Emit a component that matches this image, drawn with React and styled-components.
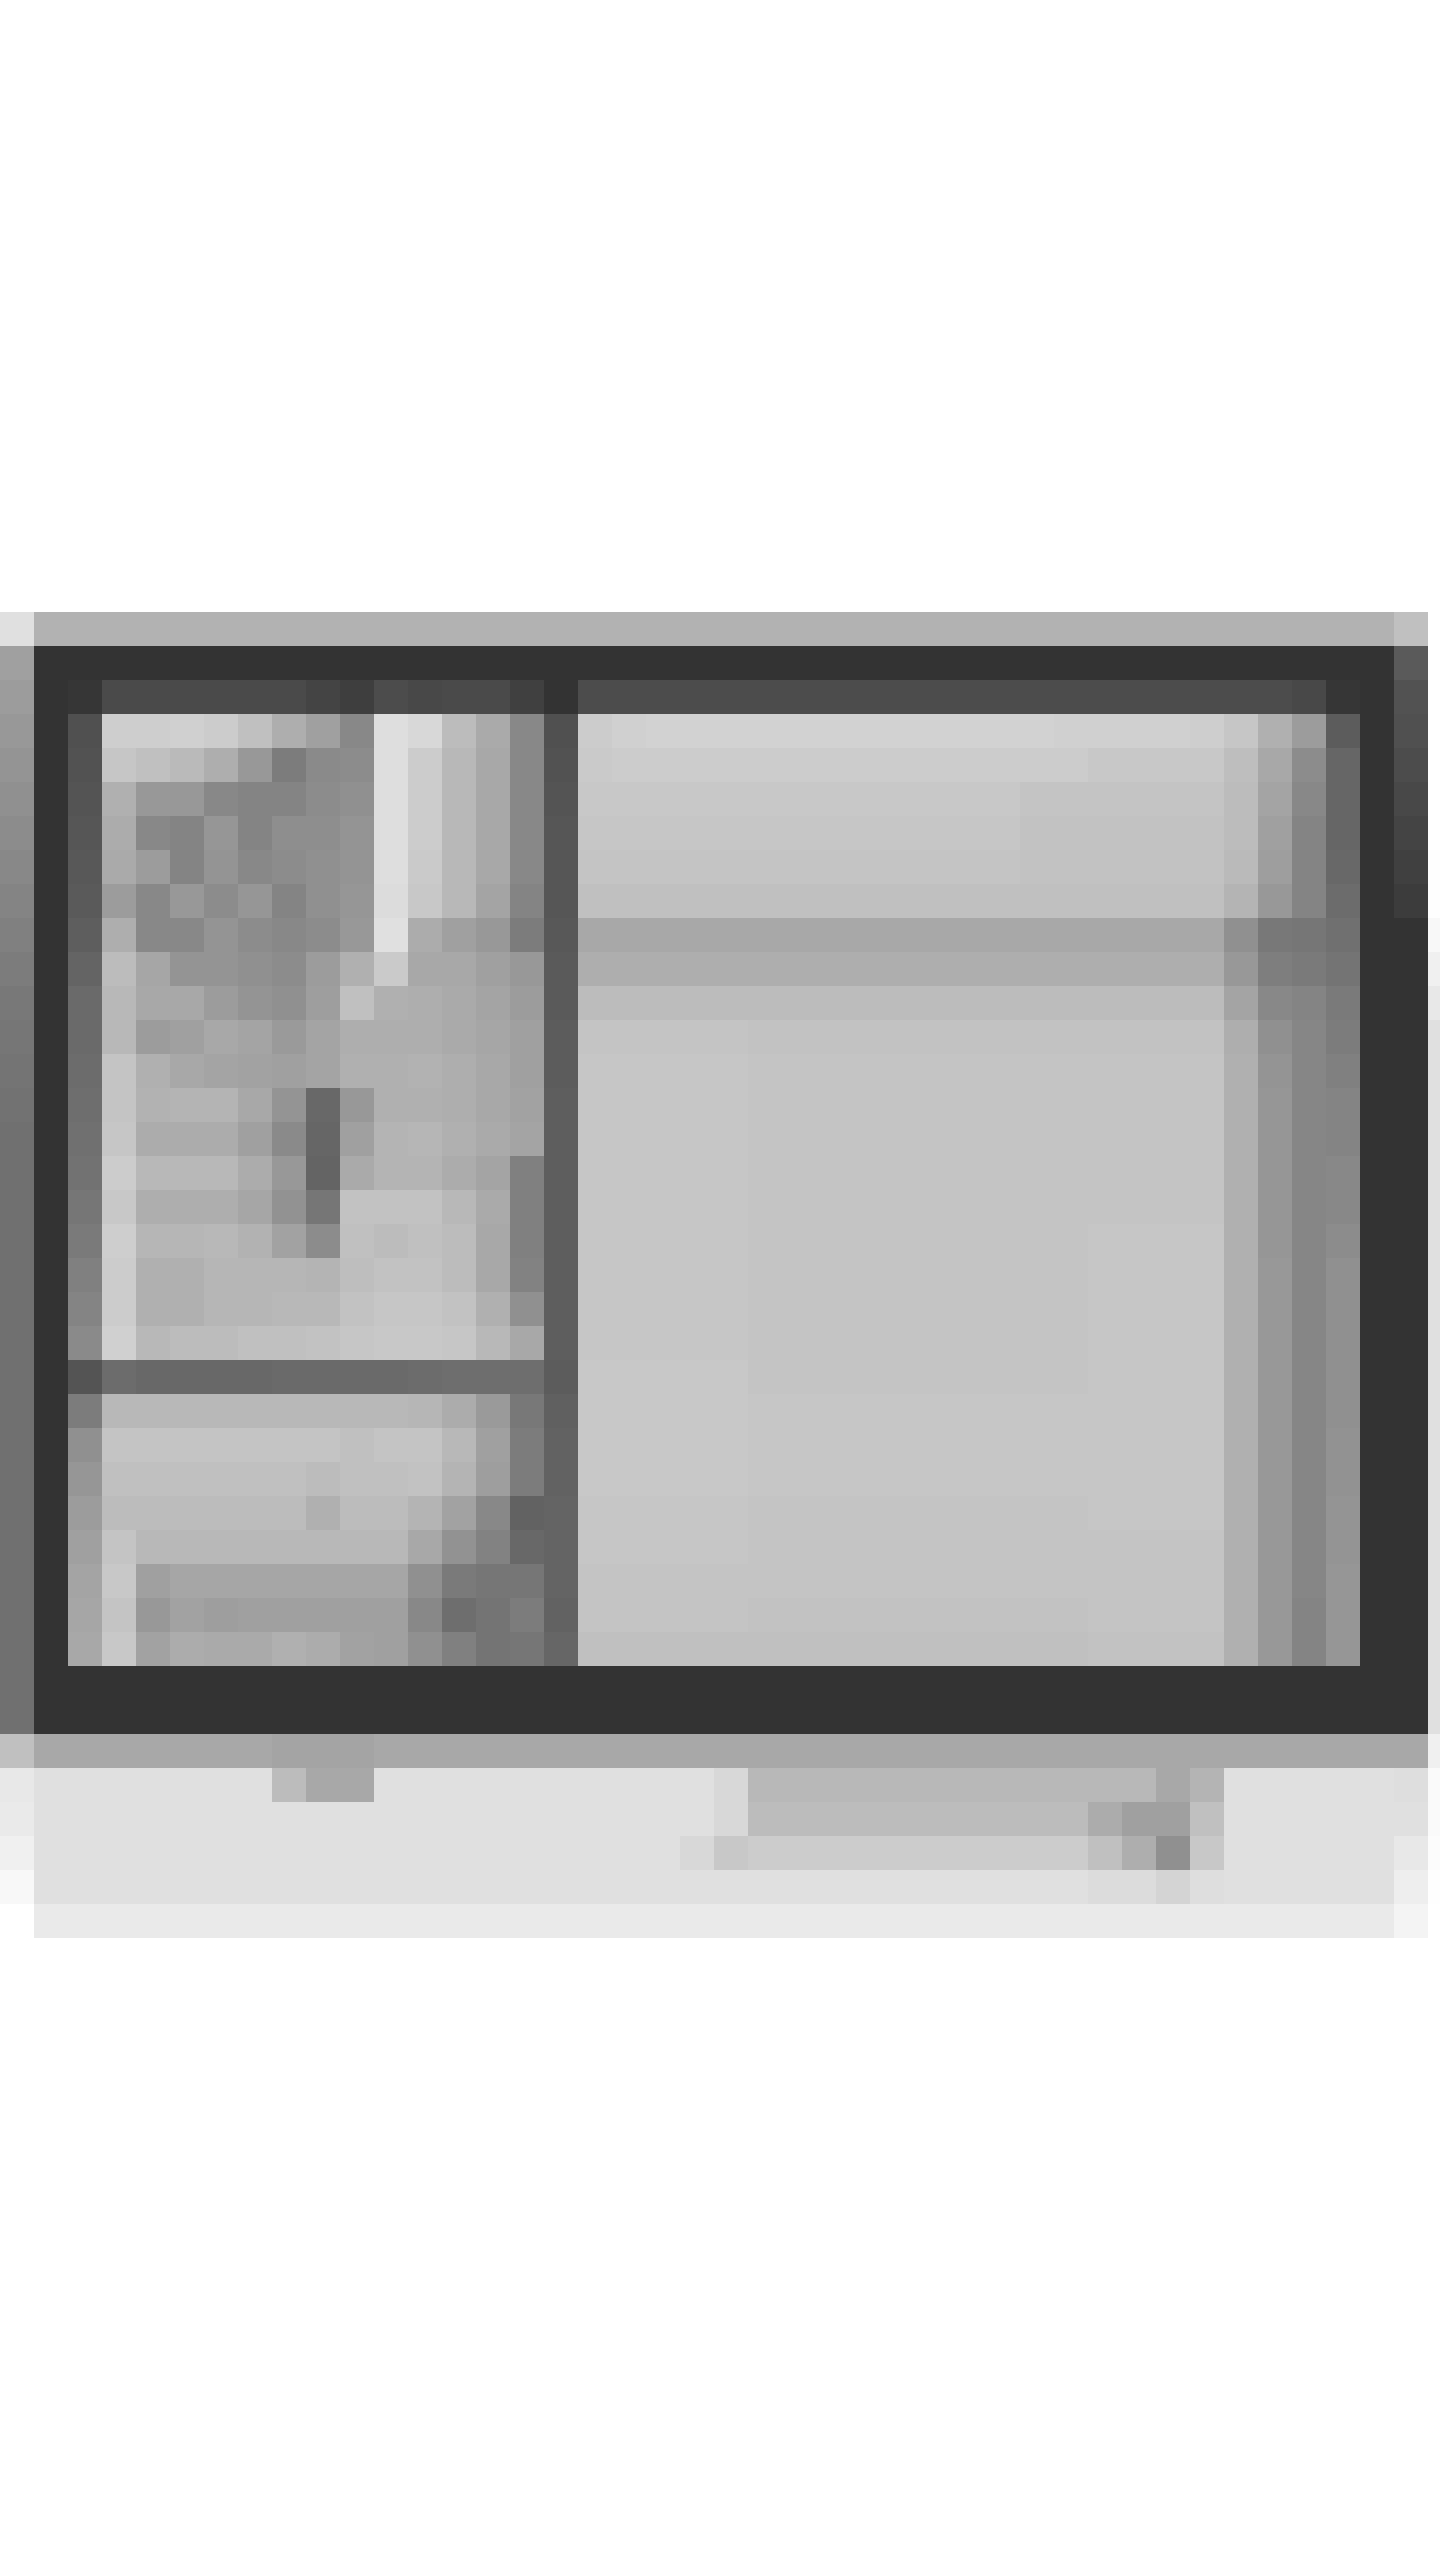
import React from "react";
import styled, { createGlobalStyle } from "styled-components";

const CELL = 34;

// 43 x 39 grey cells, "xx*n" repeats a value n times
const ROWS = [
  "e0 b2*40 c0 ff",
  "a0 33*40 5a ff",
  "9c 33 36 4a*6 44 3e 4c 48 4a 4a 40 33 4c*21 48 36 33 52 ff",
  "98 33 50 ce ce d0 cc c0 ae a0 88 de d8 bc aa 88 50 cc d0 d2*12 d0*4 ce c6 b0 9c 5c 33 50 ff",
  "94 33 52 c6 c0 ba ae 98 7c 8a 8c de cc b8 a8 88 52 ca cc*14 c8*4 be a8 8c 66 33 4c ff",
  "90 33 54 b0 98 98 88 84 84 8c 90 de cc b8 a8 88 54 c8*13 c4*6 bc a4 88 66 33 48 ff",
  "8c 33 56 ac 88 84 96 84 8e 8e 94 de cc b8 a8 88 56 c6*13 c2*6 bc a0 84 66 33 44 ff",
  "88 33 58 aa 9c 84 94 88 8c 90 94 de ca b8 a8 88 56 c4*13 c2*6 ba 9e 84 68 33 40 fe",
  "84 33 5a 9c 88 98 8c 96 84 90 96 dc c8 b8 a4 84 56 c0*19 b4 98 84 6c 33 3c fe",
  "80 33 5e ae 88 88 94 8c 88 8c 98 e0 ac a0 98 7c 58 a8*19 90 78 76 70 33 33 f8",
  "7c 33 64 bc a6 94 94 90 8c 9c b0 ca a8 a8 a0 98 5a ae*19 98 7e 7a 74 33 33 f0",
  "78 33 6a b8 a8 a8 9c 94 90 9e c0 b0 ae aa a4 9c 5a bc*19 a4 88 84 7a 33 33 e8",
  "76 33 6a b8 9c a0 a8 a4 9a a4 ae ae ae aa a6 a0 5c c4*5 c2*10 c2*4 ae 90 86 7c 33 33 e0",
  "74 33 6c c4 b0 a8 a4 a2 a0 a4 b0 b0 b2 ae a8 a0 5c c6*5 c4*10 c4*4 b0 94 86 80 33 33 e0",
  "72 33 6e c4 b2 b4 b4 a8 94 68 98 b0 b0 ae a8 a2 5e c6*5 c4*10 c4*4 b0 96 86 84 33 33 e0",
  "70 33 70 c6 ac ac ac a0 8a 66 a0 b4 b6 b0 aa a4 5e c6*5 c4*10 c4*4 b0 96 86 84 33 33 e0",
  "70 33 72 cc b8 b8 b8 ac 98 64 aa b4 b4 ac a4 80 5e c6*5 c4*10 c4*4 b0 96 86 88 33 33 e0",
  "70 33 76 c8 ae ae ae a6 92 76 c2 c2 c2 b8 aa 80 5e c6*5 c4*10 c4*4 b0 96 86 88 33 33 e0",
  "70 33 7a ce b6 b6 b8 b2 a2 8c c0 bc c0 bc a8 80 5e c6*5 c4*10 c6*4 b0 96 86 8c 33 33 e0",
  "70 33 80 cc b0 b0 b6 b6 b6 b4 be c2 c2 bc a8 82 5e c6*5 c4*10 c6*4 b0 98 86 90 33 33 e0",
  "70 33 84 cc b0 b0 b6 b6 b8 b8 c2 c6 c6 c2 b0 90 5e c6*5 c4*10 c6*4 b0 98 86 90 33 33 e0",
  "70 33 8a d0 b8 bc bc c0 c0 c2 c6 c8 c8 c6 b8 a8 5e c6*5 c4*10 c6*4 b0 98 86 90 33 33 e0",
  "70 33 54 6c 68*4 6a*4 6c 6e 6e 6e 5c c8*5 c4*10 c6*4 b0 98 86 90 33 33 e0",
  "70 33 7c b8*9 b6 ac 9a 78 60 c8*5 c6*10 c6*4 b0 98 86 90 33 33 e0",
  "70 33 90 c4*7 c0 c4 c4 b8 a0 7c 62 c8*5 c6*10 c6*4 b0 98 86 92 33 33 e0",
  "70 33 96 c0*6 bc c0 c0 c2 b4 9e 7c 62 c8*5 c6*10 c6*4 b0 98 86 92 33 33 e0",
  "70 33 9c bc*6 b0 bc bc b4 a2 88 62 64 c6*5 c4*10 c6*4 b0 98 86 94 33 33 e0",
  "70 33 a0 c4 b8*7 b8 a8 92 82 68 64 c6*5 c4*10 c4*4 b0 98 86 94 33 33 e0",
  "70 33 a4 c8 a0 a6*7 90 7a 76 76 64 c4*5 c4*10 c4*4 b0 98 86 96 33 33 e0",
  "70 33 a6 c4 98 a2 9e a0*5 88 6e 74 7c 62 c4*5 c2*10 c4*4 b0 98 84 96 33 33 e0",
  "70 33 a8 c8 a2 ac aa aa b0 ac a2 a0 90 80 74 76 66 c0*5 c0*10 c2*4 b0 98 84 96 33 33 e0",
  "70 33*40 33 e0",
  "70 33*40 33 e0",
  "c0 a8*7 a4*3 a8*30 a8 f0",
  "e8 e0*7 bc a8 a8 e0*10 d8 b8*12 a8 b4 e0*5 de fa",
  "ea e0*20 d8 bc*10 ac a0 a0 c0 e0*5 e0 fa",
  "f0 e0*19 d8 c8 cc*10 c0 ae 90 c8 e0*5 e8 fc",
  "f8 e0*31 dc dc d4 de e0*5 ee fe",
  "ff ea*40 f4 ff",
].map((row) =>
  row.split(" ").flatMap((token) => {
    const [value, count] = token.split("*");
    return Array(Number(count || 1)).fill(value);
  })
);

const GlobalStyle = createGlobalStyle`
  html, body {
    margin: 0;
    background: #ffffff;
  }
`;

const Page = styled.div`
  width: 1440px;
  height: 2560px;
  padding-top: 612px;
  box-sizing: border-box;
  overflow: hidden;
  background: #ffffff;
`;

const Thumbnail = styled.svg`
  display: block;
  width: 1440px;
  height: 1326px;
  shape-rendering: crispEdges;
`;

function PixelPicture() {
  return (
    <Thumbnail viewBox="0 0 1440 1326" role="img" aria-label="window thumbnail">
      {ROWS.map((row, y) =>
        row.map((value, x) => (
          <rect
            key={`${x}-${y}`}
            x={x * CELL}
            y={y * CELL}
            width={CELL}
            height={CELL}
            fill={`#${value}${value}${value}`}
          />
        ))
      )}
    </Thumbnail>
  );
}

export default function App() {
  return (
    <>
      <GlobalStyle />
      <Page>
        <PixelPicture />
      </Page>
    </>
  );
}
